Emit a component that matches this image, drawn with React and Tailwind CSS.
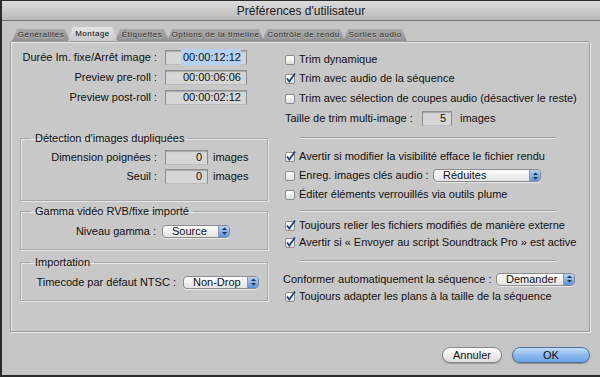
import React from 'react';

const TABS = [
  { label: 'Généralités', w: 'w-[58px]' },
  { label: 'Montage', w: 'w-[49px]', active: true },
  { label: 'Étiquettes', w: 'w-[54px]' },
  { label: 'Options de la timeline', w: 'w-[97px]' },
  { label: 'Contrôle de rendu', w: 'w-[83px]' },
  { label: 'Sorties audio', w: 'w-[64px]' },
];

function Check({ on }) {
  return (
    <svg width="11" height="11" viewBox="0 0 11 11" className="shrink-0 overflow-visible">
      <defs>
        <linearGradient id="cbg" x1="0" y1="0" x2="0" y2="1">
          <stop offset="0" stopColor="#ffffff" />
          <stop offset="1" stopColor="#dedede" />
        </linearGradient>
      </defs>
      <rect x="0.5" y="1.5" width="9" height="9" rx="1.5" fill="url(#cbg)" stroke="#8d8d8d" />
      {on && <path d="M2 5.5 L4.3 8.6 L10 0.6" fill="none" stroke="#1e3f7c" strokeWidth="1.7" />}
    </svg>
  );
}

function Field({ value, w, sel }) {
  return (
    <div className={`h-[15px] ${w} border border-[#8f8f8f] border-b-[#bdbdbd] bg-[#d6d6d6] shadow-[inset_0_1px_1px_#a9a9a9] flex items-center justify-end pr-[5px]`}>
      <span className={sel ? 'bg-[#b4d2f7] pl-[2px]' : ''}>{value}</span>
    </div>
  );
}

function Popup({ label, w }) {
  return (
    <div className={`h-[13px] ${w} rounded-[4px] border border-[#8c8c8c] bg-linear-to-b from-white to-[#e2e2e2] flex items-center shadow-[0_1px_0_#e8e8e8]`}>
      <span className="flex-1 pl-[9px] leading-none">{label}</span>
      <div className="w-[11px] h-full rounded-r-[3px] bg-linear-to-b from-[#b4d0f2] to-[#5d92d6] flex items-center justify-center border-l border-[#7e9cc4]">
        <svg width="5" height="8" viewBox="0 0 5 8">
          <path d="M0 3 L2.5 0.5 L5 3 Z M0 5 L2.5 7.5 L5 5 Z" fill="#1d2d48" />
        </svg>
      </div>
    </div>
  );
}

function Group({ title, className, children }) {
  return (
    <fieldset className={`ml-[9px] w-[248px] border border-[#a9a9a9] shadow-[1px_1px_0_#e6e6e6,inset_1px_1px_0_#e6e6e6] ${className}`}>
      <legend className="ml-[10px] px-[4px] leading-[12px] text-[#111]">{title}</legend>
      {children}
    </fieldset>
  );
}

function Sep({ className }) {
  return <div className={`ml-[20px] w-[256px] h-[2px] border-t border-[#9e9e9e] border-b border-b-[#e9e9e9] ${className}`} />;
}

function CheckRow({ on, h, children }) {
  return (
    <div className={`${h} flex items-center pl-[5px] gap-[3px]`}>
      <Check on={on} />
      {children}
    </div>
  );
}

export default function App() {
  return (
    <div className="w-[600px] h-[377px] bg-[#2b2b2b] pl-[2px] pb-[2px] pt-[1px] font-['Liberation_Sans',Arial,sans-serif] text-[11px] text-[#111]">
      <div className="h-full bg-[#c5c5c5] flex flex-col">
        <div className="h-[20px] shrink-0 bg-linear-to-b from-[#dcdcdc] to-[#b9b9b9] border-b border-[#747474] flex items-center justify-center">
          <span className="text-[12px] text-[#1a1a1a] pt-[1px]">Préférences d'utilisateur</span>
        </div>

        <div className="h-[13px] mt-[7px] pl-[10px] flex items-end">
          {TABS.map((t) => (
            <div
              key={t.label}
              className={`${t.w} -mr-[2px] flex items-center justify-center text-[8px] tracking-[0.5px] leading-none whitespace-nowrap [text-shadow:0_1px_0_#c4c4c4] [clip-path:polygon(5px_0,calc(100%_-_5px)_0,100%_100%,0_100%)] ${
                t.active
                  ? 'h-[14px] z-10 bg-linear-to-b from-[#e4e4e4] to-[#cacaca] text-[#111]'
                  : 'h-[12px] bg-linear-to-b from-[#a9a9a9] to-[#939393] text-[#2f2f2f]'
              }`}
            >
              {t.label}
            </div>
          ))}
        </div>

        <div className="ml-[8px] w-[580px] h-[291px] border border-[#9c9c9c] bg-[#c8c8c8] shadow-[inset_1px_1px_0_#e4e4e4,1px_1px_0_#ececec] flex">
          <div className="w-[269px] shrink-0 flex flex-col pt-[5px]">
            {[
              ['Durée Im. fixe/Arrêt image :', '00:00:12:12', true],
              ['Preview pre-roll :', '00:00:06:06', false],
              ['Preview post-roll :', '00:00:02:12', false],
            ].map(([l, v, s]) => (
              <div key={l} className="h-[20px] flex items-center">
                <span className="w-[146px] text-right">{l}</span>
                <div className="ml-[8px]">
                  <Field value={v} w="w-[82px]" sel={s} />
                </div>
              </div>
            ))}

            <Group title="Détection d'images dupliquées" className="mt-[25px] pt-[4px] pb-[14px]">
              {[
                ['Dimension poignées :'],
                ['Seuil :'],
              ].map(([l]) => (
                <div key={l} className="h-[19px] flex items-center">
                  <span className="w-[136px] text-right">{l}</span>
                  <div className="ml-[8px]">
                    <Field value="0" w="w-[43px]" />
                  </div>
                  <span className="ml-[5px]">images</span>
                </div>
              ))}
            </Group>

            <Group title="Gamma vidéo RVB/fixe importé" className="mt-[4px] pt-[6px] pb-[10px]">
              <div className="h-[16px] flex items-center">
                <span className="w-[135px] text-right">Niveau gamma :</span>
                <div className="ml-[6px]">
                  <Popup label="Source" w="w-[68px]" />
                </div>
              </div>
            </Group>

            <Group title="Importation" className="mt-[6px] pt-[6px] pb-[10px]">
              <div className="h-[16px] flex items-center">
                <span className="w-[155px] text-right">Timecode par défaut NTSC :</span>
                <div className="ml-[7px]">
                  <Popup label="Non-Drop" w="w-[76px]" />
                </div>
              </div>
            </Group>
          </div>

          <div className="flex-1 flex flex-col pt-[8px]">
            <CheckRow h="h-[19px]">Trim dynamique</CheckRow>
            <CheckRow h="h-[19px]" on>Trim avec audio de la séquence</CheckRow>
            <CheckRow h="h-[20px]">Trim avec sélection de coupes audio (désactiver le reste)</CheckRow>
            <div className="h-[20px] flex items-center pl-[5px]">
              <span className="w-[137px]">Taille de trim multi-image :</span>
              <Field value="5" w="w-[30px]" />
              <span className="ml-[8px]">images</span>
            </div>

            <Sep className="mt-[9px]" />

            <div className="mt-[8px]" />
            <CheckRow h="h-[19px]" on>Avertir si modifier la visibilité efface le fichier rendu</CheckRow>
            <CheckRow h="h-[19px]">
              <span className="w-[131px]">Enreg. images clés audio :</span>
              <Popup label="Réduites" w="w-[108px]" />
            </CheckRow>
            <CheckRow h="h-[19px]">Éditer éléments verrouillés via outils plume</CheckRow>

            <Sep className="mt-[6px]" />

            <div className="mt-[4px]" />
            <CheckRow h="h-[18px]" on>Toujours relier les fichiers modifiés de manière externe</CheckRow>
            <CheckRow h="h-[17px]" on>Avertir si « Envoyer au script Soundtrack Pro » est active</CheckRow>

            <Sep className="mt-[9px]" />

            <div className="mt-[9px] h-[16px] flex items-center pl-[3px]">
              <span className="w-[213px]">Conformer automatiquement la séquence :</span>
              <Popup label="Demander" w="w-[79px]" />
            </div>
            <CheckRow h="h-[18px]" on>Toujours adapter les plans à la taille de la séquence</CheckRow>
          </div>
        </div>

        <div className="flex justify-end items-center gap-[10px] pr-[10px] mt-[15px]">
          <button className="w-[60px] h-[16px] rounded-full border border-[#858585] bg-linear-to-b from-white to-[#dcdcdc] shadow-[0_1px_1px_#9a9a9a] text-[11px] leading-none">
            Annuler
          </button>
          <button className="w-[78px] h-[16px] rounded-full border border-[#4f72a4] bg-linear-to-b from-[#c3dcf7] via-[#8fb9ec] to-[#6aa2e6] shadow-[0_1px_1px_#8a8a8a] text-[11px] leading-none">
            OK
          </button>
        </div>
      </div>
    </div>
  );
}
